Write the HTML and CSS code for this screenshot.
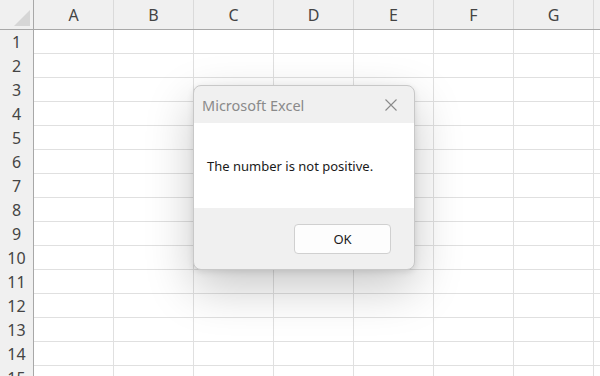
FILE: index.html
```html
<!DOCTYPE html>
<html lang="en">
<head>
    <meta charset="UTF-8">
    <title>Microsoft Excel</title>
    <link rel="stylesheet" href="styles.css">
</head>
<body>
    <!-- Planilha -->
    <div class="sheet">
        <div class="corner"><span class="corner-tri"></span></div>
        <div class="col-head">A</div>
        <div class="col-head">B</div>
        <div class="col-head">C</div>
        <div class="col-head">D</div>
        <div class="col-head">E</div>
        <div class="col-head">F</div>
        <div class="col-head">G</div>
        <div class="col-head"></div>
    </div>
    <div class="rows" id="rows"></div>

    <!-- Caixa de mensagem -->
    <div class="msgbox">
        <div class="msgbox-title">
            <span>Microsoft Excel</span>
            <svg class="close" width="12" height="12" viewBox="0 0 12 12">
                <path d="M0.5 0.5 L11.5 11.5 M11.5 0.5 L0.5 11.5" stroke="#8a8a8a" stroke-width="1.1" fill="none"/>
            </svg>
        </div>
        <div class="msgbox-body">The number is not positive.</div>
        <div class="msgbox-footer">
            <button class="ok-btn">OK</button>
        </div>
    </div>

    <script>
        const rows = document.getElementById('rows');
        for (let r = 1; r <= 15; r++) {
            const row = document.createElement('div');
            row.className = 'row';
            let html = `<div class="row-head">${r}</div>`;
            for (let c = 0; c < 8; c++) {
                html += '<div class="cell"></div>';
            }
            row.innerHTML = html;
            rows.appendChild(row);
        }
    </script>
</body>
</html>
```

FILE: styles.css
```css
/* Geral */
body {
    margin: 0;
    width: 600px;
    height: 376px;
    overflow: hidden;
    background: #fff;
    font-family: "Noto Sans", "Open Sans", sans-serif;
    color: #444;
}

/* Cabeçalho das colunas */
.sheet {
    display: grid;
    grid-template-columns: 34px repeat(8, 80px);
    height: 29px;
    background: #f0f0f0;
    border-bottom: 1px solid #a8a8a8;
}

.corner {
    position: relative;
    border-right: 1px solid #a8a8a8;
    box-sizing: border-box;
}

.corner-tri {
    position: absolute;
    right: 3px;
    bottom: 3px;
    width: 0;
    height: 0;
    border-left: 16px solid transparent;
    border-bottom: 16px solid #d6d6d6;
}

.col-head {
    display: flex;
    align-items: center;
    justify-content: center;
    font-size: 16px;
    color: #444;
    border-right: 1px solid #dadada;
    box-sizing: border-box;
}

/* Linhas */
.row {
    display: grid;
    grid-template-columns: 34px repeat(8, 80px);
    height: 24px;
    box-sizing: border-box;
    border-bottom: 1px solid #e0e0e0;
}

.row-head {
    display: flex;
    align-items: center;
    justify-content: center;
    background: #f0f0f0;
    font-size: 16px;
    color: #444;
    border-right: 1px solid #a8a8a8;
    box-sizing: border-box;
    margin-bottom: -1px;
}

.cell {
    border-right: 1px solid #e0e0e0;
    box-sizing: border-box;
}

/* Caixa de mensagem */
.msgbox {
    position: absolute;
    left: 193px;
    top: 85px;
    width: 222px;
    height: 185px;
    box-sizing: border-box;
    border: 1px solid #c8c8c8;
    border-radius: 8px;
    background: #f0f0f0;
    overflow: hidden;
    display: flex;
    flex-direction: column;
    box-shadow: 0 18px 48px rgba(0, 0, 0, 0.22), 0 2px 6px rgba(0, 0, 0, 0.1);
}

.msgbox-title {
    height: 37px;
    display: flex;
    align-items: center;
    justify-content: space-between;
    padding: 0 17px 0 8px;
    font-size: 14.5px;
    color: #8a8a8a;
}

.msgbox-body {
    height: 85px;
    background: #fff;
    display: flex;
    align-items: center;
    padding-left: 13px;
    font-size: 13px;
    color: #1a1a1a;
}

.msgbox-footer {
    flex: 1;
    display: flex;
    justify-content: flex-end;
    align-items: flex-start;
    padding: 16px 23px 0 0;
}

.ok-btn {
    width: 97px;
    height: 30px;
    background: #fdfdfd;
    border: 1px solid #d0d0d0;
    border-radius: 4px;
    font-family: "Noto Sans", sans-serif;
    font-size: 13px;
    color: #1a1a1a;
}
```
